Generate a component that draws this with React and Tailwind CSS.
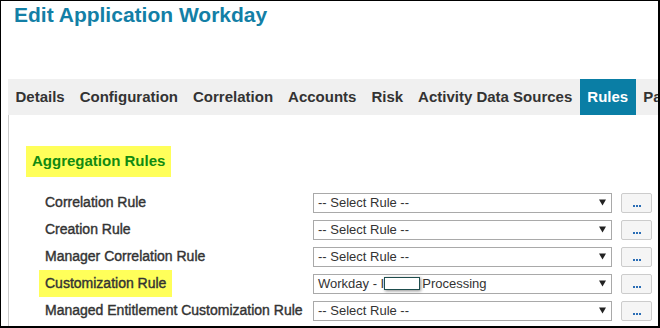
const tabs = ['Details', 'Configuration', 'Correlation', 'Accounts', 'Risk', 'Activity Data Sources', 'Rules', 'Password Policy'];

const rows = [
  { label: 'Correlation Rule', value: null },
  { label: 'Creation Rule', value: null },
  { label: 'Manager Correlation Rule', value: null },
  { label: 'Customization Rule', value: 'workday', highlight: true },
  { label: 'Managed Entitlement Customization Rule', value: null },
];

const RuleSelect = ({ value }) => {
  return (
    <div className="w-[299px] h-[20px] border border-[#a9a9a9] bg-white flex items-center justify-between pl-[4px] pr-[5px] text-[13px] text-[#333] leading-none">
      {value ? (
        <span className="flex items-center whitespace-pre">
          <span>Workday - </span>
          <span className="text-[#333]">I</span>
          <span className="inline-block w-[36px] h-[13px] bg-white border border-[#1e4d4d] shadow-[1px_1px_3px_rgba(0,0,0,0.45)]" />
          <span className="ml-[2px]">Processing</span>
        </span>
      ) : (
        <span className="whitespace-nowrap">-- Select Rule --</span>
      )}
      <svg width="7" height="7" viewBox="0 0 7 7">
        <path d="M0 0.5 L7 0.5 L3.5 6.5 Z" fill="#222" />
      </svg>
    </div>
  );
};

const App = () => {
  return (
    <div className="w-[660px] h-[328px] bg-white border-black border-t border-l border-r-2 border-b-2 flex flex-col overflow-hidden font-['Liberation_Sans',Arial,sans-serif]">
      <h1 className="mt-[2px] pl-[13px] text-[21px] leading-[24px] font-bold text-[#137fa6]">
        Edit Application Workday
      </h1>

      <div className="mt-[52px] ml-[7px] h-[36px] bg-[#f0f0f0] flex overflow-hidden shrink-0">
        {tabs.map((tab) => (
          <div
            key={tab}
            className={`px-[7.5px] flex items-center whitespace-nowrap text-[15px] font-bold ${
              tab === 'Rules' ? 'bg-[#0a7ea5] text-white' : 'text-[#333]'
            }`}
          >
            {tab}
          </div>
        ))}
      </div>

      <div className="flex-1 ml-[7px] border-l border-[#cccccc] flex flex-col">
        <div className="mt-[31px] ml-[17px] self-start h-[31px] px-[6px] flex items-center bg-[#ffff5a] text-[15px] font-bold text-[#118a11]">
          Aggregation Rules
        </div>

        <div className="mt-[12px] flex flex-col">
          {rows.map((row) => (
            <div key={row.label} className="h-[27px] flex items-center">
              <div className="w-[304px] pl-[30px] flex items-stretch h-full">
                <span
                  className={`px-[6px] flex items-center whitespace-nowrap text-[14px] text-[#333] [-webkit-text-stroke:0.4px_#333] ${
                    row.highlight ? 'bg-[#ffff5a]' : ''
                  }`}
                >
                  {row.label}
                </span>
              </div>
              <RuleSelect value={row.value} />
              <button className="ml-[9px] w-[31px] h-[20px] bg-[#f5f5f5] border border-[#cccccc] rounded-[2px] flex items-end justify-center pb-[5px]">
                <span className="flex gap-[1px]">
                  <span className="w-[2px] h-[2px] bg-[#2a6db5]" />
                  <span className="w-[2px] h-[2px] bg-[#2a6db5]" />
                  <span className="w-[2px] h-[2px] bg-[#2a6db5]" />
                </span>
              </button>
            </div>
          ))}
        </div>
      </div>
    </div>
  );
};

export default App;
